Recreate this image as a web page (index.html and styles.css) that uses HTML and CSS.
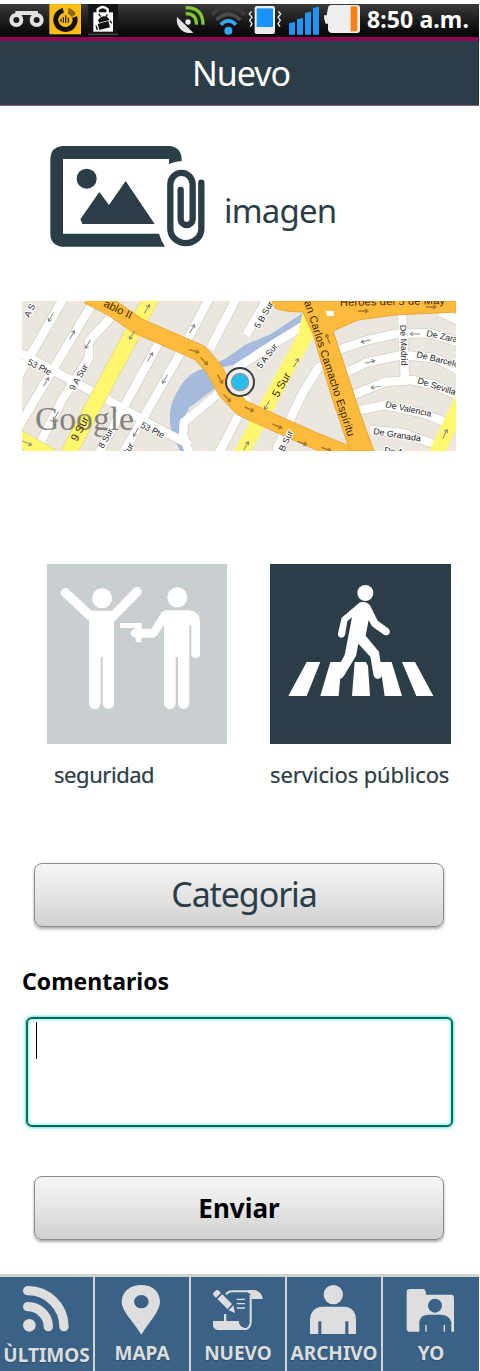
FILE: index.html
```html
<!DOCTYPE html>
<html lang="es">
<head>
<meta charset="utf-8">
<title>Nuevo</title>
<link rel="stylesheet" href="styles.css">
</head>
<body>
<div class="screen">
  <div class="status">
    <svg class="status-left" viewBox="0 12 360 99" width="120" height="33">
      <g fill="none" stroke="#e2e2e2" stroke-width="12"><circle cx="49" cy="60" r="15"/><circle cx="110" cy="60" r="15"/><path d="M46 39H114"/></g>
      <rect x="148" y="12" width="95" height="91" fill="#fdbd16"/>
      <path d="M190 31A29 29 0 1 0 224 51" fill="none" stroke="#141005" stroke-width="15"/>
      <path d="M205 24A36 36 0 0 1 228 42L216 51A26 26 0 0 0 204 43Z" fill="#8a6815"/>
      <path d="M183 56V66M190 51V68M197 46V69M205 53V68" stroke="#3b2c05" stroke-width="4"/>
      <path d="M265 12V103H354V12" fill="#141414"/><path d="M265 103H354" stroke="#888" stroke-width="2"/>
      <path d="M293 40V28Q308 14 323 28V40" fill="none" stroke="#fff" stroke-width="7"/>
      <path d="M280 37H339V95H280Z" fill="#fff"/>
      <path d="M294 61Q306 42 323 52L329 60L298 68ZM293 72L325 63L330 82L298 90Z" fill="#111"/>
      <path d="M296 42L302 50M322 43L318 52M288 77L292 90M330 62L335 70" stroke="#111" stroke-width="4"/>
    </svg>
    <svg class="status-right" viewBox="525 12 558 99" width="186" height="33">
      <path d="M531 51L580 98Q553 104 538 83Q528 70 531 51Z" fill="#e4e4e4"/><circle cx="564" cy="66" r="8" fill="#eee"/>
      <g fill="none" stroke="#82c832" stroke-width="10"><path d="M557 41Q590 40 589 74"/><path d="M557 23Q609 22 609 74"/></g>
      <g fill="none" stroke-width="11"><path d="M636 44Q685 -4 734 44" stroke="#3b3b3b"/><path d="M649 60Q685 26 721 60" stroke="#4c4c4c"/><path d="M662 74Q685 51 708 74" stroke="#32a7f2"/></g>
      <circle cx="685" cy="92" r="12" fill="#32a7f2"/>
      <path d="M755 34L748 42L756 52L749 61L756 71L751 80M835 34L842 42L834 52L841 61L834 71L840 80" fill="none" stroke="#eee" stroke-width="4"/>
      <rect x="764" y="18" width="61" height="84" rx="7" fill="#eee"/><rect x="770" y="25" width="49" height="56" fill="#1894f7"/>
      <path d="M867 70L885 66V104H867ZM891 58L909 54V104H891ZM915 39L933 35V104H915ZM939 24L957 20V104H939Z" fill="#2294f5"/>
      <path d="M972 46H980L984 24Q985 15 994 15H1072Q1080 15 1080 24V90Q1080 99 1071 99H994Q985 98 984 88V71H977Q971 58 972 46Z" fill="#eee"/>
      <rect x="1052" y="19" width="20" height="75" fill="#fb8113"/>
    </svg>
    <span class="clock">8:50 a.m.</span>
  </div>
  <header class="header">Nuevo</header>
  <main>
    <div class="attach">
      <svg viewBox="30 45 468 309" width="156" height="103">
        <g fill="#2b3d47">
          <path fill-rule="evenodd" d="M66 48H392Q426 54 425 93Q403 94 387 102V87H69V311H357Q363 332 375 350H66Q32 346 31 312V84Q34 51 66 48Z"/>
          <circle cx="140" cy="146" r="30"/><path d="M121 268L178 186L207 225L257 153L344 282H127Z"/>
        </g>
        <path d="M484 158V296A46 43 0 0 1 391 296V163A33 34 0 0 1 458 163V267A18 18 0 0 1 422 267V180" fill="none" stroke="#2b3d47" stroke-width="19" stroke-linecap="round"/>
      </svg>
      <span class="attach-label">imagen</span>
    </div>
    <svg class="map" viewBox="22 301 434 150" width="434" height="150">
      <defs>
        <g id="streets" fill="none">
          <path d="M66 294L18 377M98 294L18 428M114 314L89 341V358L62 400L34 455M15 350L58 373L108 400L148 423L190 445M162 337L115 423L98 455M211 295L182 350L122 455M240 291L210 349M219 393L184 422L183 435L190 455M248 397L218 455M268 298L246 335M303 326L275 343L235 369M334 359L318 368L300 398L276 451M335 351L368 340L395 334L430 333L460 343M343 374L368 362L402 355L435 358L460 371M353 395L385 382L412 380L435 385L460 397M360 410L385 405L422 413L450 424M370 430L402 433L440 446M402 312L405 380M440 312L460 321"/>
        </g>
        <path id="main" d="M88 296L112 308L138 326L168 339L200 353L214 369L226 391L242 408L275 423L318 442L355 457" fill="none" stroke-linejoin="round"/>
        <path id="arrow" d="M-5 0H5M2 -2L5 0L2 2" fill="none" stroke="#888" stroke-width="1"/>
        <path id="oneway" d="M-5 0H5M2 -2L5 0L2 2" fill="none" stroke="#a9742a" stroke-width="1.3"/>
      </defs>
      <path d="M22 301H456V451H22Z" fill="#ebe7df"/>
      <use href="#streets" stroke="#d4d0c6" stroke-width="10"/>
      <path d="M245 345L225 359L197 371Q184 377 176 394Q167 410 171 430L180 451H188L182 421L189 408L218 386L207 370L245 363L278 344L304 325V312L271 334Z" fill="#a5bbdd"/>
      <use href="#streets" stroke="#fff" stroke-width="8.5"/>
      <path d="M155 291L68 454M15 436L52 457" fill="none" stroke="#e3dc9a" stroke-width="17"/>
      <path d="M155 291L68 454M15 436L52 457M462 400L434 458" fill="none" stroke="#fff86e" stroke-width="15"/>
      <path d="M303 311L315 333L251 451H234L298 334Z" fill="#fff86e"/>
      <use href="#main" stroke="#e8a638" stroke-width="17"/>
      <use href="#main" stroke="#fdbb3d" stroke-width="15.5"/>
      <path d="M270 301H456V312L395 315L358 320L333 331L345 367L360 413L374 451H350L332 398L313 334L303 312Q276 312 272 305Z" fill="#fdbb3d" stroke="#e8a638"/>
      <path d="M326 311H334V316H327Z" fill="#fff"/>
      <g><use href="#arrow" transform="translate(51 317) rotate(120)"/><use href="#arrow" transform="translate(72 335) rotate(-60)"/><use href="#arrow" transform="translate(88 344) rotate(120)"/><use href="#arrow" transform="translate(147 309) rotate(-60)"/><use href="#arrow" transform="translate(132 335) rotate(120)"/><use href="#arrow" transform="translate(150 357) rotate(-60)"/><use href="#arrow" transform="translate(192 329) rotate(-60)"/><use href="#arrow" transform="translate(165 379) rotate(120)"/><use href="#arrow" transform="translate(46 382) rotate(-60)"/><use href="#arrow" transform="translate(56 416) rotate(120)"/><use href="#arrow" transform="translate(136 432) rotate(120)"/><use href="#arrow" transform="translate(27 443) rotate(25)"/><use href="#arrow" transform="translate(296 363) rotate(-60)"/><use href="#arrow" transform="translate(267 405) rotate(120)"/><use href="#arrow" transform="translate(246 446) rotate(-60)"/><use href="#arrow" transform="translate(366 341) rotate(165)"/><use href="#arrow" transform="translate(370 362) rotate(-15)"/><use href="#arrow" transform="translate(376 387) rotate(170)"/><use href="#arrow" transform="translate(415 334) rotate(180)"/><use href="#arrow" transform="translate(445 434) rotate(-65)"/></g>
      <g><use href="#oneway" transform="translate(194 351) rotate(15)"/><use href="#oneway" transform="translate(204 361) rotate(45)"/><use href="#oneway" transform="translate(220 379) rotate(60)"/><use href="#oneway" transform="translate(227 398) rotate(45)"/><use href="#oneway" transform="translate(249 409) rotate(25)"/><use href="#oneway" transform="translate(277 426) rotate(25)"/><use href="#oneway" transform="translate(302 443) rotate(20)"/><use href="#oneway" transform="translate(326 449) rotate(20)"/><use href="#oneway" transform="translate(363 311)"/><use href="#oneway" transform="translate(431 307)"/><use href="#oneway" transform="translate(328 339) rotate(-110)"/></g>
      <text class="google" x="35" y="430" textLength="99" lengthAdjust="spacingAndGlyphs">Google</text>
      <g class="streets">
        <text transform="translate(29 318) rotate(-62)">A S</text>
        <text transform="translate(27 364) rotate(27)">53 Pte</text>
        <text transform="translate(74 391) rotate(-60)">9 A Sur</text>
        <text transform="translate(140 427) rotate(27)">53 Pte</text>
        <text transform="translate(103 449) rotate(-60)">8 Sur</text>
        <text transform="translate(127 457) rotate(-60)">Sur</text>
        <text transform="translate(259 329) rotate(-60)">5 B Sur</text>
        <text transform="translate(261 369) rotate(-53)">5 A Sur</text>
        <text transform="translate(284 452) rotate(-65)">B Sur</text>
        <text transform="translate(400 325) rotate(88)">De Madrid</text>
        <text transform="translate(426 336) rotate(12)">De Zara</text>
        <text transform="translate(416 357) rotate(14)">De Barcelo</text>
        <text transform="translate(417 383) rotate(18)">De Sevilla</text>
        <text transform="translate(385 407) rotate(12)">De Valencia</text>
        <text transform="translate(373 434) rotate(9)">De Granada</text>
        <text transform="translate(384 453) rotate(8)">De A</text>
      </g>
      <g class="avenues">
        <text transform="translate(103 306) rotate(26)">ablo II</text>
        <text transform="translate(77 442) rotate(-62)">9 Sur</text>
        <text transform="translate(278 398) rotate(-60)">5 Sur</text>
        <text transform="translate(304 302) rotate(72)" textLength="142">an Carlos Camacho Espíritu</text>
        <text x="340" y="306" textLength="105" transform="rotate(-1 340 306)">Héroes del 5 de May</text>
      </g>
      <circle cx="240" cy="382" r="14" fill="#eee" stroke="#3c3c3c" stroke-width="2"/><circle cx="240" cy="382" r="8.5" fill="#27bfea" stroke="#8a9a9f" stroke-width="1.5"/>
    </svg>
    <div class="kinds">
      <figure class="kind kind-a">
        <svg viewBox="21 27 540 540" width="180" height="180">
          <path d="M21 27H561V567H21Z" fill="#c9ced0"/>
          <g fill="#fff">
            <circle cx="186" cy="130" r="30"/><circle cx="412" cy="127" r="30"/>
            <path d="M147 167H222V445A17 17 0 0 1 188 445V306H182V445A17 17 0 0 1 147 445Z"/>
            <path d="M372 166H448Q480 170 480 200V297A13 13 0 0 1 454 297V211H448V445A17 17 0 0 1 414 445V307H407V445A17 17 0 0 1 372 445V210L350 242Q345 248 336 248H304V261H287V248Q272 245 272 234Q274 222 285 221V219H240V204H305V221H334L360 180Q366 168 378 166Z"/>
          </g>
          <path d="M76 113L152 184M291 110L216 187" stroke="#fff" stroke-width="28" stroke-linecap="round"/>
        </svg>
        <figcaption>seguridad</figcaption>
      </figure>
      <figure class="kind kind-b">
        <svg viewBox="30 27 543 540" width="181" height="180">
          <path d="M30 27H573V567H30Z" fill="#2b3d47"/>
          <g fill="#fff">
            <circle cx="316" cy="114" r="24"/>
            <path d="M140 321H181L140 423H85ZM211 321H250L241 368L236 423H181ZM284 321H317L324 332L330 423H276ZM360 321H395L426 423H374L366 368ZM426 321H465L520 423H469Z"/>
            <path d="M300 142Q321 137 331 153L353 197L383 219Q394 228 387 237Q382 243 372 239L336 214L326 195L317 242L357 290L366 355Q367 371 353 372Q344 371 341 362L331 305L295 266L288 303L252 362Q245 373 238 370L227 350L254 300L276 187L262 199L255 240Q251 250 242 248Q233 246 234 235L245 188Z"/>
          </g>
        </svg>
        <figcaption>servicios públicos</figcaption>
      </figure>
    </div>
    <button class="button category">Categoria</button>
    <label class="comments">Comentarios</label>
    <div class="field"><span class="caret"></span></div>
    <button class="button send">Enviar</button>
  </main>
  <nav class="tabs">
    <a class="tab first">
      <svg viewBox="0 0 282 195" width="94" height="65"><g fill="none" stroke="#dedede" stroke-width="28" stroke-linecap="round"><path d="M83 41A108 108 0 0 1 192 149M83 89A62 60 0 0 1 145 149"/></g><circle cx="88" cy="145" r="19" fill="#dedede"/></svg>
      <span>ÙLTIMOS</span>
    </a>
    <a class="tab">
      <svg viewBox="285 0 282 195" width="94" height="65"><path fill-rule="evenodd" fill="#dedede" d="M424 24C459 24 480 45 480 75C480 103 449 132 424 173C399 132 365 103 365 75C365 45 389 24 424 24ZM424 54A22 20 0 1 0 424 94A22 20 0 1 0 424 54Z"/></svg>
      <span>MAPA</span>
    </a>
    <a class="tab">
      <svg viewBox="573 0 282 195" width="94" height="65">
        <g transform="translate(588 3)">
          <path d="M51 46L60 37Q65 34 69 39L75 45L60 59L53 53ZM79 49L108 78L95 94L64 63ZM112 82L117 105L98 97ZM51 129H84V108H91V129H128Q130 146 146 150L150 156H65Q52 154 51 142Z" fill="#dedede"/>
          <path d="M156 36H178Q199 43 200 63H166V50L156 44Z" fill="#dedede"/>
          <path d="M90 49Q97 40 107 40H160M164 50V133Q162 151 146 154" fill="none" stroke="#dedede" stroke-width="6"/>
          <path d="M122 64H147M122 77H147M122 90H147" stroke="#dedede" stroke-width="4"/>
        </g>
      </svg>
      <span>NUEVO</span>
    </a>
    <a class="tab">
      <svg viewBox="141 0 282 195" width="94" height="65"><path d="M248 89H312Q348 91 348 130V171H325V133H316V171H244V133H235V171H210V130Q211 91 248 89Z" fill="#dedede"/><circle cx="280" cy="53" r="29" fill="#dedede"/></svg>
      <span>ARCHIVO</span>
    </a>
    <a class="tab">
      <svg viewBox="429 0 288 195" width="96" height="65"><path d="M508 36H550Q558 37 558 53H636Q642 54 642 62V164H508Q500 163 500 155V44Q500 37 508 36Z" fill="#dedede"/><circle cx="585" cy="86" r="21" fill="#3a6186"/><path d="M538 166V135Q541 113 566 113H605Q629 115 634 136V166Z" fill="#3a6186"/><path d="M558 144V164M613 144V164" stroke="#dedede" stroke-width="4"/></svg>
      <span>YO</span>
    </a>
  </nav>
</div>
</body>
</html>
```

FILE: styles.css
```css
* { box-sizing: border-box; }
body { margin: 0; background: #fff; font-family: "Noto Sans", "Open Sans", sans-serif; }
.screen { width: 479px; height: 1371px; padding-top: 4px; display: flex; flex-direction: column; color: #2b3d47; }
svg { display: block; flex: none; }
.status { height: 33px; display: flex; background: linear-gradient(#3b3b3b, #1c1c1c 50%, #030303); color: #fff; }
.status-right { margin-left: 55px; }
.clock { margin-left: 6px; font-weight: 700; font-size: 23px; line-height: 30px; letter-spacing: .1px; white-space: nowrap; }
.header { height: 69px; border-top: 4px solid #8c0754; border-bottom: 1px solid #a0508d; background: #2b3d47; color: #fff; font-size: 34px; line-height: 65px; letter-spacing: -1px; text-align: center; padding-left: 3px; }
main { display: flex; flex-direction: column; height: 1168px; }
.attach { display: flex; margin: 39px 0 0 50px; height: 103px; }
.attach-label { margin-left: 18px; font-size: 33px; line-height: 40px; padding-top: 46px; letter-spacing: -.8px; }
.map { margin: 53px 0 0 22px; overflow: hidden; }
.google { font-family: "Liberation Serif", serif; font-size: 34px; fill: #666; fill-opacity: .8; }
.streets, .avenues { font-family: "Liberation Sans", sans-serif; font-size: 8.8px; fill: #222; stroke: #fff; stroke-width: 2px; paint-order: stroke; }
.avenues { font-size: 11px; fill: #3a2605; stroke: none; }
.kinds { display: flex; margin: 113px 0 0 47px; height: 232px; }
.kind { margin: 0; font-size: 22px; line-height: 30px; white-space: nowrap; -webkit-text-stroke: .2px #2b3d47; }
.kind-a { width: 223px; }
.kind figcaption { margin-top: 15px; }
.kind-a figcaption { padding-left: 7px; letter-spacing: -.45px; }
.kind-b figcaption { letter-spacing: -.1px; }
.button { display: block; width: 410px; height: 64px; margin-left: 34px; padding: 0; border: 1px solid #8b8b8b; border-radius: 8px; background: linear-gradient(#f5f5f5, #e7e7e7 45%, #d0d0d0); box-shadow: 0 2px 3px #aaa; font: 400 34px/60px "Noto Sans", sans-serif; color: #2b3d47; flex: none; }
.category { margin-top: 67px; letter-spacing: -1.1px; padding: 0 0 3px 10px; }
.comments { margin: 39px 0 0 22px; height: 32px; font-weight: 700; font-size: 23px; line-height: 30px; color: #000; }
.field { margin: 19px 0 0 26px; width: 427px; height: 110px; flex: none; border: 2px solid #0b6864; border-radius: 6px; box-shadow: 0 0 3px 1px #65ded4, inset 0 0 3px 1px #8ff3ec; padding: 3px 8px; }
.caret { display: block; width: 1px; height: 37px; background: #000; }
.send { margin-top: 49px; font-weight: 700; font-size: 26px; color: #000; line-height: 61px; }
.tabs { display: grid; grid-template-columns: 93px 94px 94px 94px 96px; column-gap: 2px; height: 97px; border-top: 3px solid #d3d3cf; background: #d3d3cf; }
.tab { display: flex; flex-direction: column; align-items: center; background: #3a6186; color: #dcdedd; font-size: 19px; font-weight: 700; line-height: 24px; overflow: hidden; white-space: nowrap; text-shadow: 0 1px 1px #2c4b68; }
.tab span { margin-top: -1px; }
.first span { margin-top: 1px; }
```
